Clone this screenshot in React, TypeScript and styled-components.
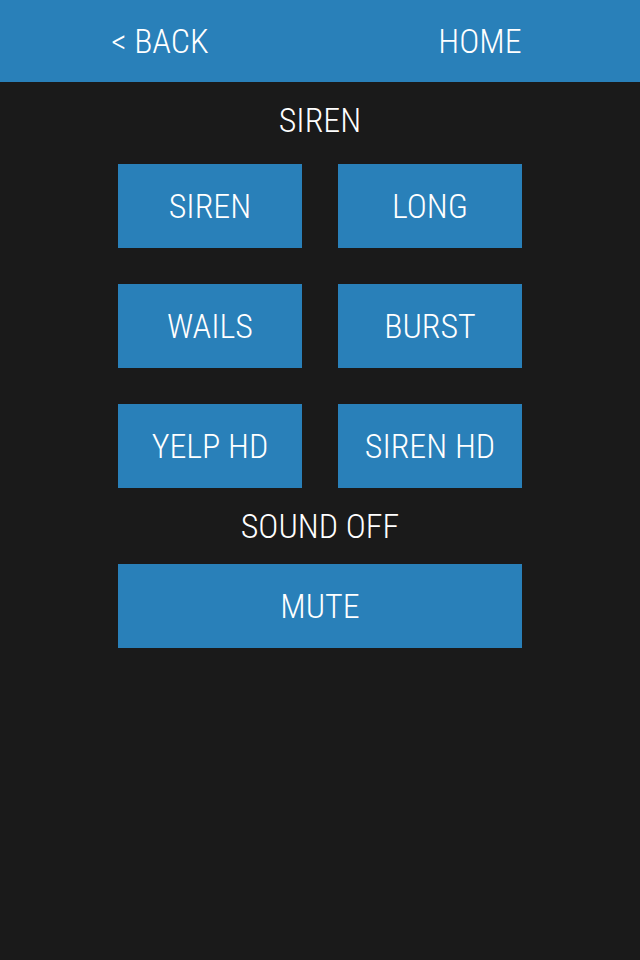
import React from 'react'
import styled, { createGlobalStyle } from 'styled-components'

const GlobalStyle = createGlobalStyle`
    html, body {
        margin: 0;
        padding: 0;
        background: #1a1a1a;
    }
    body {
        font-family: 'Roboto Condensed', 'Liberation Sans Narrow', sans-serif;
        font-weight: 300;
        color: #ffffff;
    }
`

const sirenButtons = ['SIREN', 'LONG', 'WAILS', 'BURST', 'YELP HD', 'SIREN HD']

function App() {
    return (
        <>
            <GlobalStyle />
            <Screen>
                <Header>
                    <NavButton>&lt; BACK</NavButton>
                    <NavButton>HOME</NavButton>
                </Header>
                <Content>
                    <Title $spaceAfter={6}>SIREN</Title>
                    <ButtonGrid>
                        {sirenButtons.map((label) => (
                            <ToneButton key={label}>{label}</ToneButton>
                        ))}
                    </ButtonGrid>
                    <Title $spaceAfter={0}>SOUND OFF</Title>
                    <ToneButton $wide>MUTE</ToneButton>
                </Content>
            </Screen>
        </>
    )
}

const Screen = styled.div`
    width: 640px;
    min-height: 960px;
    background: #1a1a1a;
`

const Header = styled.div`
    display: grid;
    grid-template-columns: 1fr 1fr;
    height: 82px;
    background: #2980b9;
`

const NavButton = styled.div`
    display: flex;
    align-items: center;
    justify-content: center;
    font-size: 34px;
    cursor: pointer;
`

const Content = styled.div`
    display: flex;
    flex-direction: column;
    align-items: center;
`

const Title = styled.div<{ $spaceAfter: number }>`
    display: flex;
    align-items: center;
    justify-content: center;
    height: 76px;
    margin-bottom: ${(props) => props.$spaceAfter}px;
    font-size: 34px;
`

const ButtonGrid = styled.div`
    display: grid;
    grid-template-columns: 184px 184px;
    gap: 36px;
`

const ToneButton = styled.div<{ $wide?: boolean }>`
    display: flex;
    align-items: center;
    justify-content: center;
    width: ${(props) => (props.$wide ? '404px' : '184px')};
    height: 84px;
    background: #2980b9;
    font-size: 34px;
    cursor: pointer;
`

export default App
